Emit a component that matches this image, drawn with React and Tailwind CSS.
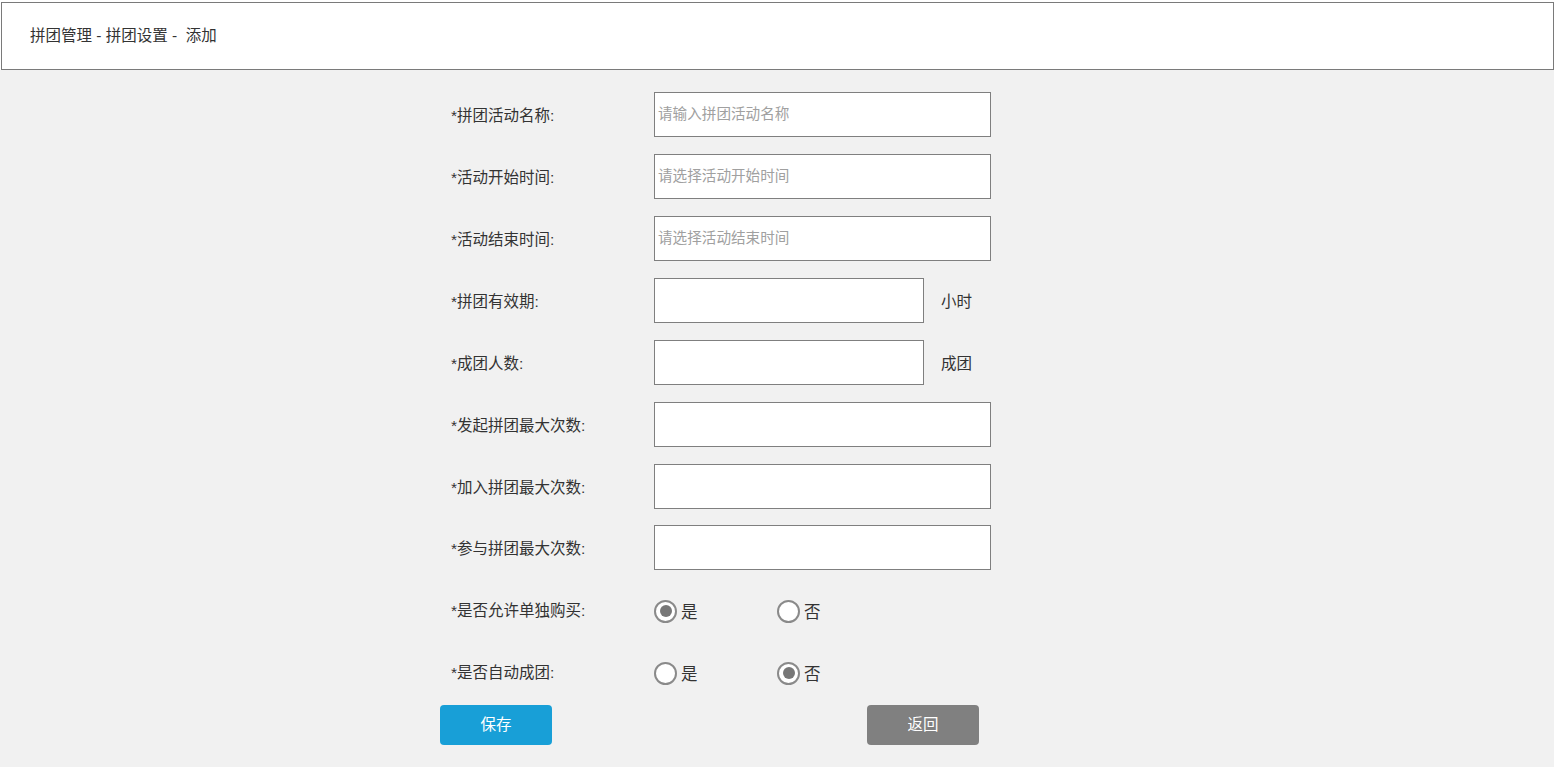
const FONT = { fontFamily: '"Liberation Sans", "Noto Sans CJK SC", sans-serif' };

const textRows = [
  { label: '*拼团活动名称:', placeholder: '请输入拼团活动名称' },
  { label: '*活动开始时间:', placeholder: '请选择活动开始时间' },
  { label: '*活动结束时间:', placeholder: '请选择活动结束时间' },
  { label: '*拼团有效期:', suffix: '小时' },
  { label: '*成团人数:', suffix: '成团' },
  { label: '*发起拼团最大次数:' },
  { label: '*加入拼团最大次数:' },
  { label: '*参与拼团最大次数:' },
];

function Radio({ checked, text }) {
  return (
    <div className="flex items-center">
      <span className="w-[23px] h-[23px] rounded-full border-2 border-[#8a8a8a] bg-white flex items-center justify-center">
        {checked && <span className="w-[12px] h-[12px] rounded-full bg-[#777777]" />}
      </span>
      <span className="ml-[4px] text-[16.5px] text-[#333] mt-[3px]">{text}</span>
    </div>
  );
}

export default function App() {
  return (
    <div className="w-[1555px] h-[770px] bg-white pt-[2px] px-[1px]" style={FONT}>
      {/* Header */}
      <div className="h-[68px] w-[1553px] border border-[#7a7a7a] bg-white flex items-center pl-[28px]">
        <span className="text-[15.5px] text-[#333]">拼团管理 - 拼团设置 - &nbsp;添加</span>
      </div>

      {/* Form area */}
      <div className="h-[697px] w-[1554px] -ml-[1px] bg-[#f1f1f1] pt-[22px]">
        <div className="ml-[451px]">
          {textRows.map((row, i) => (
            <div key={i} className={`flex items-center h-[45px] ${i === 7 ? 'mb-[19px]' : i === 6 ? 'mb-[16px]' : 'mb-[17px]'}`}>
              <div className="w-[203px] text-[15.5px] text-[#333] mt-[2px]">{row.label}</div>
              <div
                className={`h-[45px] ${row.suffix ? 'w-[270px]' : 'w-[337px]'} border border-[#7f7f7f] bg-white flex items-center pl-[3px]`}
              >
                {row.placeholder && (
                  <span className="text-[14.6px] text-[#a0a0a0]">{row.placeholder}</span>
                )}
              </div>
              {row.suffix && <span className="ml-[17px] text-[15.5px] text-[#333] mt-[2px]">{row.suffix}</span>}
            </div>
          ))}

          <div className="flex items-center h-[44px] mb-[18px]">
            <div className="w-[203px] text-[15.5px] text-[#333]">*是否允许单独购买:</div>
            <div className="w-[123px]">
              <Radio checked text="是" />
            </div>
            <Radio text="否" />
          </div>

          <div className="flex items-center h-[44px]">
            <div className="w-[203px] text-[15.5px] text-[#333]">*是否自动成团:</div>
            <div className="w-[123px]">
              <Radio text="是" />
            </div>
            <Radio checked text="否" />
          </div>
        </div>

        <div className="ml-[440px] mt-[10px] flex">
          <button className="w-[112px] h-[40px] rounded-[4px] bg-[#189fd7] text-white text-[15.5px]">保存</button>
          <button className="ml-[315px] w-[112px] h-[40px] rounded-[4px] bg-[#808080] text-white text-[15.5px]">返回</button>
        </div>
      </div>
    </div>
  );
}
